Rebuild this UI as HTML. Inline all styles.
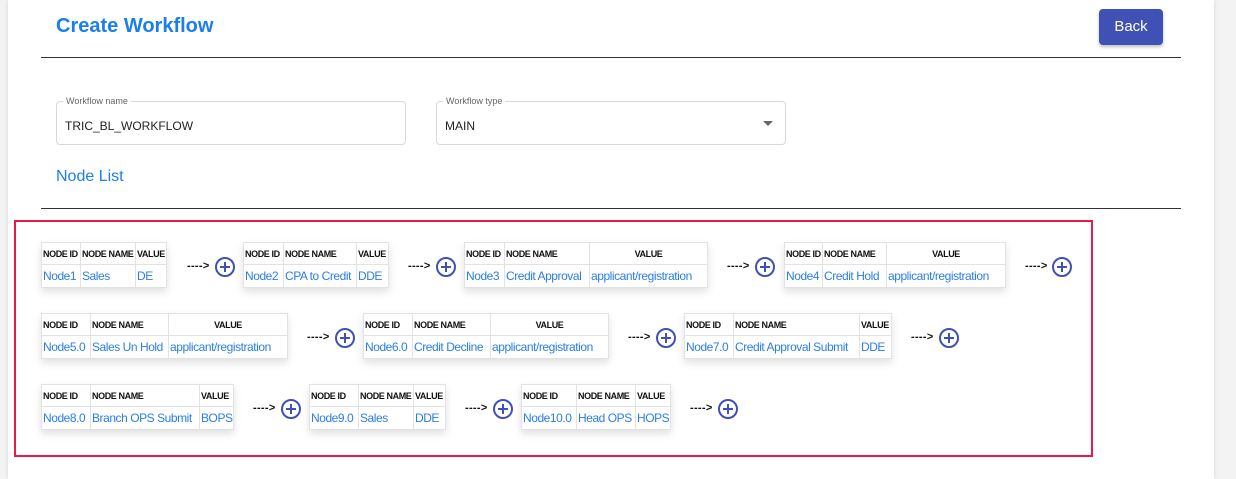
<!DOCTYPE html>
<html><head><meta charset="utf-8"><style>
body{margin:0;width:1236px;height:479px;background:#f3f3f3;font-family:"Liberation Sans",sans-serif;position:relative;overflow:hidden}
.card{position:absolute;left:8px;top:0;width:1206px;height:479px;background:#fff;box-shadow:0 0 4px rgba(0,0,0,.12)}
.a{position:absolute}
h1{position:absolute;left:56px;top:15px;margin:0;font-size:20px;font-weight:bold;color:#1a7fea}
.hr{position:absolute;left:41px;width:1140px;height:1px;background:#333}
.back{position:absolute;left:1099px;top:9px;width:64px;height:36px;background:#3f51b5;color:#fff;border-radius:4px;font-size:15px;line-height:36px;text-align:center;box-shadow:0 2px 3px rgba(0,0,0,.25)}
.inp{position:absolute;top:101px;width:348px;height:42px;border:1px solid #d8d8d8;border-radius:4px}
.inp .l{position:absolute;left:6px;top:-6px;background:#fff;padding:0 3px;font-size:9px;color:#666}
.inp .v{position:absolute;left:8px;top:17px;font-size:12px;color:#222}
.red{position:absolute;left:14px;top:220px;width:1075px;height:233px;border:2px solid #f0164a}
table{position:absolute;border-collapse:collapse;table-layout:fixed;box-shadow:0 4px 8px rgba(0,0,0,.12);background:#fff}
td,th{border:1.5px solid #e2e2e2;padding:0 1px;white-space:nowrap;overflow:hidden}
th{height:21px;font-size:9px;font-weight:bold;color:#111;text-align:left;letter-spacing:-.4px}
th.c{text-align:center}
td{height:22px;font-size:12px;letter-spacing:-.45px;color:#2b7de9}
.ar{position:absolute;font-size:11px;font-weight:bold;color:#111;letter-spacing:.3px}
.pl{position:absolute;width:16px;height:16px;border:2px solid #3f51b5;border-radius:50%}
.pl:before{content:"";position:absolute;left:3px;top:7px;width:10px;height:2px;background:#3f51b5}
.pl:after{content:"";position:absolute;left:7px;top:3px;width:2px;height:10px;background:#3f51b5}
</style></head><body>
<div class="card"></div>
<h1>Create Workflow</h1>
<div class="back">Back</div>
<div class="hr" style="top:57px"></div>
<div class="inp" style="left:56px"><span class="l">Workflow name</span><span class="v">TRIC_BL_WORKFLOW</span></div>
<div class="inp" style="left:436px"><span class="l">Workflow type</span><span class="v">MAIN</span><span class="a" style="right:12px;top:19px;width:0;height:0;border-left:5px solid transparent;border-right:5px solid transparent;border-top:5px solid #666"></span></div>
<div class="a" style="left:56px;top:168px;font-size:16px;color:#1a7fea">Node List</div>
<div class="hr" style="top:208px"></div>
<div class="red"></div>

<table style="left:41px;top:242px;width:125px"><col style="width:39px"><col style="width:55px"><col style="width:31px"><tr><th>NODE ID</th><th>NODE NAME</th><th>VALUE</th></tr><tr><td>Node1</td><td>Sales</td><td>DE</td></tr></table>
<div class="ar" style="left:187px;top:260px">----&gt;</div><div class="pl" style="left:215px;top:257px"></div>

<table style="left:243px;top:242px;width:145px"><col style="width:40px"><col style="width:73px"><col style="width:32px"><tr><th>NODE ID</th><th>NODE NAME</th><th>VALUE</th></tr><tr><td>Node2</td><td>CPA to Credit</td><td>DDE</td></tr></table>
<div class="ar" style="left:408px;top:260px">----&gt;</div><div class="pl" style="left:436px;top:257px"></div>

<table style="left:464px;top:242px;width:243px"><col style="width:40px"><col style="width:85px"><col style="width:118px"><tr><th>NODE ID</th><th>NODE NAME</th><th class="c">VALUE</th></tr><tr><td>Node3</td><td>Credit Approval</td><td>applicant/registration</td></tr></table>
<div class="ar" style="left:727px;top:260px">----&gt;</div><div class="pl" style="left:755px;top:257px"></div>

<table style="left:784px;top:242px;width:221px"><col style="width:38px"><col style="width:64px"><col style="width:119px"><tr><th>NODE ID</th><th>NODE NAME</th><th class="c">VALUE</th></tr><tr><td>Node4</td><td>Credit Hold</td><td>applicant/registration</td></tr></table>
<div class="ar" style="left:1025px;top:260px">----&gt;</div><div class="pl" style="left:1052px;top:257px"></div>

<table style="left:41px;top:313px;width:246px"><col style="width:49px"><col style="width:78px"><col style="width:119px"><tr><th>NODE ID</th><th>NODE NAME</th><th class="c">VALUE</th></tr><tr><td>Node5.0</td><td>Sales Un Hold</td><td>applicant/registration</td></tr></table>
<div class="ar" style="left:307px;top:331px">----&gt;</div><div class="pl" style="left:335px;top:328px"></div>

<table style="left:363px;top:313px;width:245px"><col style="width:49px"><col style="width:78px"><col style="width:118px"><tr><th>NODE ID</th><th>NODE NAME</th><th class="c">VALUE</th></tr><tr><td>Node6.0</td><td>Credit Decline</td><td>applicant/registration</td></tr></table>
<div class="ar" style="left:628px;top:331px">----&gt;</div><div class="pl" style="left:656px;top:328px"></div>

<table style="left:684px;top:313px;width:207px"><col style="width:49px"><col style="width:126px"><col style="width:32px"><tr><th>NODE ID</th><th>NODE NAME</th><th>VALUE</th></tr><tr><td>Node7.0</td><td>Credit Approval Submit</td><td>DDE</td></tr></table>
<div class="ar" style="left:911px;top:331px">----&gt;</div><div class="pl" style="left:939px;top:328px"></div>

<table style="left:41px;top:384px;width:192px"><col style="width:49px"><col style="width:109px"><col style="width:34px"><tr><th>NODE ID</th><th>NODE NAME</th><th>VALUE</th></tr><tr><td>Node8.0</td><td>Branch OPS Submit</td><td>BOPS</td></tr></table>
<div class="ar" style="left:253px;top:402px">----&gt;</div><div class="pl" style="left:281px;top:399px"></div>

<table style="left:309px;top:384px;width:136px"><col style="width:49px"><col style="width:55px"><col style="width:32px"><tr><th>NODE ID</th><th>NODE NAME</th><th>VALUE</th></tr><tr><td>Node9.0</td><td>Sales</td><td>DDE</td></tr></table>
<div class="ar" style="left:465px;top:402px">----&gt;</div><div class="pl" style="left:493px;top:399px"></div>

<table style="left:521px;top:384px;width:149px"><col style="width:55px"><col style="width:59px"><col style="width:35px"><tr><th>NODE ID</th><th>NODE NAME</th><th>VALUE</th></tr><tr><td>Node10.0</td><td>Head OPS</td><td>HOPS</td></tr></table>
<div class="ar" style="left:690px;top:402px">----&gt;</div><div class="pl" style="left:718px;top:399px"></div>
</body></html>
